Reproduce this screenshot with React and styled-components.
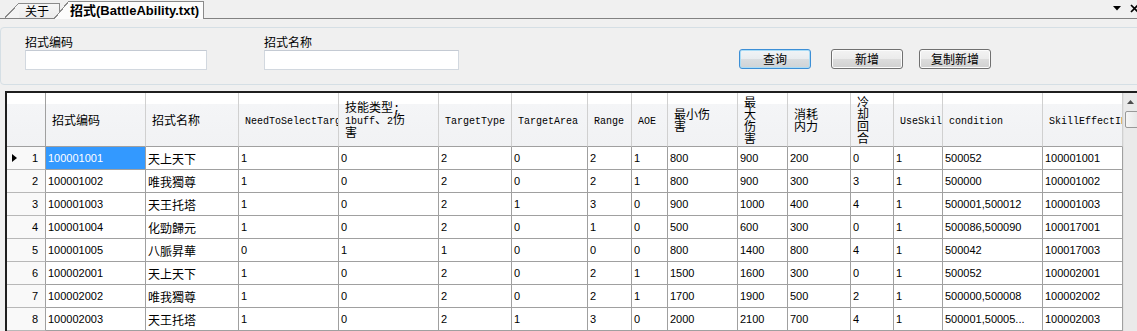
import React from 'react';
import styled, { createGlobalStyle, css } from 'styled-components';

const GlobalStyle = createGlobalStyle`
  html, body { margin: 0; padding: 0; background: #f0f0f0; overflow: hidden; }
  body { font-family: "Noto Sans CJK SC", sans-serif; color: #000; }
`;

const Window = styled.div`
  width: 1137px;
  height: 331px;
  overflow: hidden;
  display: flex;
  flex-direction: column;
  background: #f0f0f0;
`;

/* ---------- tabs ---------- */
const TabStrip = styled.div`
  flex: 0 0 19px;
  box-sizing: border-box;
  display: flex;
  align-items: flex-end;
  border-bottom: 1px solid #828282;
  padding-left: 5px;
`;

const Tab = styled.div`
  position: relative;
  display: flex;
  align-items: stretch;
  height: ${p => (p.$active ? 18 : 15)}px;
  margin-bottom: ${p => (p.$active ? -1 : 0)}px;
  margin-left: ${p => (p.$active ? -6 : 0)}px;
  z-index: ${p => (p.$active ? 1 : 0)};
`;

const TabSlant = styled.span`
  flex: 0 0 ${p => (p.$active ? 15 : 14)}px;
  background: linear-gradient(
    to bottom right,
    transparent calc(50% - 0.7px),
    #8a8a8a calc(50% - 0.7px),
    #8a8a8a calc(50% + 0.5px),
    ${p => (p.$active ? '#fcfcfc' : '#f3f3f3')} calc(50% + 0.5px)
  );
`;

const TabBody = styled.span`
  display: flex;
  align-items: center;
  box-sizing: border-box;
  border-top: 1px solid #8a8a8a;
  border-right: 1px solid #8a8a8a;
  background: ${p => (p.$active ? '#fcfcfc' : 'linear-gradient(#f6f6f6, #ececec)')};
  padding: ${p => (p.$active ? '0 4px 0 1px' : '0 10px 0 6px')};
  font-size: 12px;
  line-height: 14px;
  white-space: nowrap;
  ${p => p.$active && css`
    font-family: "Liberation Sans", "Noto Sans CJK SC", sans-serif;
    font-weight: bold;
    font-size: 13px;
  `}
`;

const TabTools = styled.div`
  margin-left: auto;
  align-self: center;
  display: flex;
  align-items: center;
  gap: 9px;
  margin-right: -2px;
  margin-top: -1px;
`;

/* ---------- filter panel ---------- */
const FilterPanel = styled.div`
  margin: 8px -6px 0 0;
  height: 58px;
  box-sizing: border-box;
  border: 1px solid #d5dfe5;
  border-radius: 4px;
  display: flex;
  align-items: flex-start;
  padding: 6px 0 0 24px;
`;

const Field = styled.div`
  display: flex;
  flex-direction: column;
  margin-left: ${p => p.$offset || 0}px;
`;

const FieldLabel = styled.label`
  font-size: 12px;
  line-height: 15px;
  height: 15px;
`;

const TextInput = styled.input`
  margin-top: 1px;
  width: ${p => p.$w}px;
  height: 20px;
  box-sizing: border-box;
  border: 1px solid #d2d8df;
  border-top-color: #c4cad3;
  background: #fff;
  outline: none;
  padding: 0 3px;
`;

const ButtonGroup = styled.div`
  display: flex;
  margin-left: 280px;
  margin-top: 15px;
`;

const Button = styled.button`
  width: 72px;
  height: 20px;
  box-sizing: border-box;
  margin-left: ${p => p.$gap || 0}px;
  padding: 0;
  border: 1px solid #707070;
  border-radius: 3px;
  background: linear-gradient(#f3f3f3 0%, #ebebeb 50%, #dddddd 50%, #d0d0d0 100%);
  box-shadow: inset 0 0 0 1px #fcfcfc;
  font-family: "Noto Sans CJK SC", sans-serif;
  font-size: 12px;
  line-height: 16px;
  color: #000;
  ${p => p.$focused && css`
    border-color: #3c8fd6;
    box-shadow: inset 0 0 0 1px #a9dcf6;
    background: linear-gradient(#f0f4f7 0%, #e8ecef 50%, #d9dde0 50%, #cfd3d6 100%);
  `}
`;

/* ---------- data grid ---------- */
const GridFrame = styled.div`
  margin: 6px 0 0 5px;
  flex: 1 1 auto;
  display: flex;
  border-top: 2px solid #1e1e1e;
  border-left: 2px solid #1e1e1e;
  overflow: hidden;
  background: #fff;
`;

const GridBody = styled.div`
  flex: 0 0 1116px;
  display: flex;
  flex-direction: column;
`;

const ROW_HEADER_W = 39;

const GridRow = styled.div`
  display: grid;
  grid-template-columns: ${p => p.$template};
  height: ${p => p.$h}px;
  flex: 0 0 ${p => p.$h}px;
`;

const HeaderCell = styled.div`
  box-sizing: border-box;
  display: flex;
  align-items: center;
  padding: 4px 26px 0 6px;
  overflow: hidden;
  background: linear-gradient(#ffffff 0, #ffffff 11px, #f4f5f7 11px, #f1f2f4 100%);
  border-right: 1px solid #d0d0d0;
  border-bottom: 1px solid #a0a0a0;
  font-family: "Liberation Mono", "Noto Sans CJK SC", monospace;
  font-size: 12px;
  line-height: 12px;
  white-space: nowrap;
`;

const HeaderLabel = styled.span`
  display: block;
  ${p => p.$latin && css`font-size: 10px;`}
`;

const Latin = styled.span`
  font-size: 10px;
`;

const CornerCell = styled(HeaderCell)`
  border-right: 1px solid #a0a0a0;
`;

const RowHeaderCell = styled.div`
  box-sizing: border-box;
  display: flex;
  align-items: center;
  justify-content: space-between;
  padding: 0 7px 0 5px;
  background: #f9f9f9;
  border-right: 1px solid #a0a0a0;
  border-bottom: 1px solid #b8b8b8;
  font-family: "Liberation Sans", sans-serif;
  font-size: 11px;
`;

const CurrentMarker = styled.span`
  width: 0;
  height: 0;
  border-top: 4px solid transparent;
  border-bottom: 4px solid transparent;
  border-left: 5px solid #000;
  visibility: ${p => (p.$show ? 'visible' : 'hidden')};
`;

const Cell = styled.div`
  box-sizing: border-box;
  display: flex;
  align-items: center;
  padding: 0 0 0 2px;
  overflow: hidden;
  white-space: nowrap;
  border-right: 1px solid #a0a0a0;
  border-bottom: 1px solid #a0a0a0;
  font-family: "Liberation Sans", "Noto Sans CJK SC", sans-serif;
  font-size: ${p => (p.$cjk ? 12 : 11)}px;
  background: ${p => (p.$selected ? '#3399ff' : '#fff')};
  color: ${p => (p.$selected ? '#fff' : '#000')};
`;

const ScrollBar = styled.div`
  flex: 0 0 17px;
  display: flex;
  flex-direction: column;
  align-items: stretch;
  background: #eaeaea;
  border-left: 1px solid #e2e2e2;
`;

const ScrollButton = styled.div`
  height: 17px;
  display: flex;
  align-items: center;
  justify-content: center;
  padding-right: 4px;
`;

const ScrollThumb = styled.div`
  height: 15px;
  margin: 1px 0 0 1px;
  border: 1px solid #999;
  border-radius: 2px;
  background: linear-gradient(to right, #f6f6f6, #e4e4e4);
`;

const COLS = [
  { w: 100, label: '招式编码' },
  { w: 93, label: '招式名称', cjk: true },
  { w: 100, label: 'NeedToSelectTarget', latin: true },
  { w: 100, label: <>技能类型;<br /><Latin>1buff</Latin>、<Latin>2</Latin>伤<br />害</> },
  { w: 73, label: 'TargetType', latin: true },
  { w: 76, label: 'TargetArea', latin: true },
  { w: 44, label: 'Range', latin: true },
  { w: 36, label: 'AOE', latin: true },
  { w: 70, label: <>最小伤<br />害</> },
  { w: 50, label: <>最<br />大<br />伤<br />害</> },
  { w: 63, label: <>消耗<br />内力</> },
  { w: 43, label: <>冷<br />却<br />回<br />合</> },
  { w: 49, label: 'UseSkillBook', latin: true },
  { w: 100, label: 'condition', latin: true },
  { w: 80, label: 'SkillEffectID', latin: true },
];

const TEMPLATE = `${ROW_HEADER_W}px ${COLS.map(c => c.w + 'px').join(' ')}`;

const ROWS = [
  ['100001001', '天上天下', '1', '0', '2', '0', '2', '1', '800', '900', '200', '0', '1', '500052', '100001001'],
  ['100001002', '唯我獨尊', '1', '0', '2', '0', '2', '1', '800', '900', '300', '3', '1', '500000', '100001002'],
  ['100001003', '天王托塔', '1', '0', '2', '1', '3', '0', '900', '1000', '400', '4', '1', '500001,500012', '100001003'],
  ['100001004', '化勁歸元', '1', '0', '2', '0', '1', '0', '500', '600', '300', '0', '1', '500086,500090', '100017001'],
  ['100001005', '八脈昇華', '0', '1', '1', '0', '0', '0', '800', '1400', '800', '4', '1', '500042', '100017003'],
  ['100002001', '天上天下', '1', '0', '2', '0', '2', '1', '1500', '1600', '300', '0', '1', '500052', '100002001'],
  ['100002002', '唯我獨尊', '1', '0', '2', '0', '2', '1', '1700', '1900', '500', '2', '1', '500000,500008', '100002002'],
  ['100002003', '天王托塔', '1', '0', '2', '1', '3', '0', '2000', '2100', '700', '4', '1', '500001,50005...', '100002003'],
];

const DropIcon = () => (
  <svg width="8" height="5" viewBox="0 0 8 5"><path d="M0 0h8L4 4.5z" fill="#000" /></svg>
);
const CloseIcon = () => (
  <svg width="9" height="9" viewBox="0 0 9 9"><path d="M1 1l7 7M8 1L1 8" stroke="#000" strokeWidth="1.7" /></svg>
);
const UpArrow = () => (
  <svg width="7" height="4" viewBox="0 0 7 4"><path d="M0 4h7L3.5 0z" fill="#4d4d4d" /></svg>
);

export default function App() {
  return (
    <Window>
      <GlobalStyle />
      <TabStrip>
        <Tab>
          <TabSlant />
          <TabBody>关于</TabBody>
        </Tab>
        <Tab $active>
          <TabSlant $active />
          <TabBody $active>招式(BattleAbility.txt)</TabBody>
        </Tab>
        <TabTools>
          <DropIcon />
          <CloseIcon />
        </TabTools>
      </TabStrip>

      <FilterPanel>
        <Field>
          <FieldLabel>招式编码</FieldLabel>
          <TextInput $w={182} />
        </Field>
        <Field $offset={57}>
          <FieldLabel>招式名称</FieldLabel>
          <TextInput $w={195} />
        </Field>
        <ButtonGroup>
          <Button $focused>查询</Button>
          <Button $gap={20}>新增</Button>
          <Button $gap={16}>复制新增</Button>
        </ButtonGroup>
      </FilterPanel>

      <GridFrame>
        <GridBody>
          <GridRow $template={TEMPLATE} $h={54}>
            <CornerCell />
            {COLS.map((c, i) => (
              <HeaderCell key={i}>
                <HeaderLabel $latin={c.latin}>{c.label}</HeaderLabel>
              </HeaderCell>
            ))}
          </GridRow>
          {ROWS.map((row, r) => (
            <GridRow key={r} $template={TEMPLATE} $h={23}>
              <RowHeaderCell>
                <CurrentMarker $show={r === 0} />
                <span>{r + 1}</span>
              </RowHeaderCell>
              {row.map((v, c) => (
                <Cell key={c} $cjk={COLS[c].cjk} $selected={r === 0 && c === 0}>{v}</Cell>
              ))}
            </GridRow>
          ))}
        </GridBody>
        <ScrollBar>
          <ScrollButton><UpArrow /></ScrollButton>
          <ScrollThumb />
        </ScrollBar>
      </GridFrame>
    </Window>
  );
}
